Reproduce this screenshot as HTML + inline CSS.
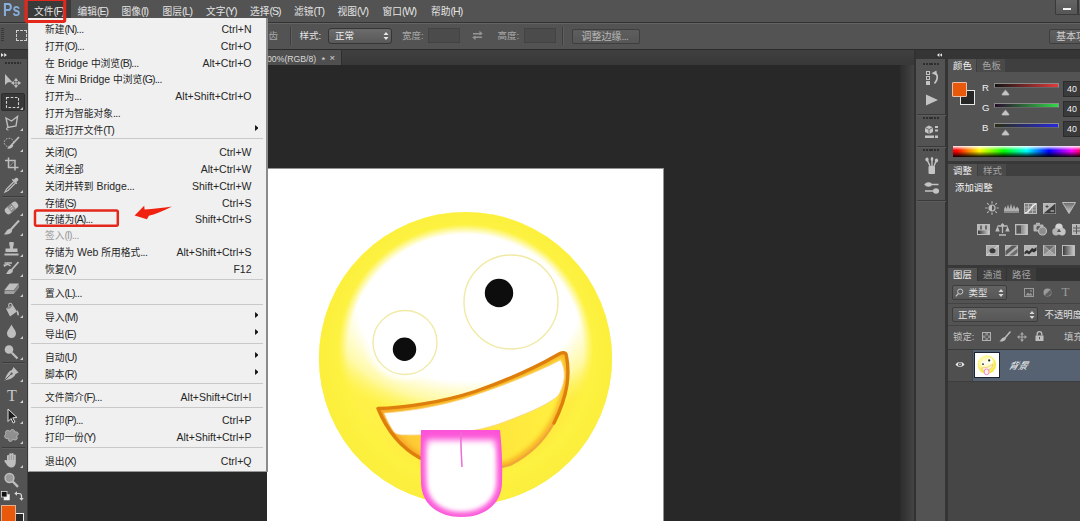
<!DOCTYPE html>
<html lang="zh"><head><meta charset="utf-8"><title>Photoshop</title>
<style>
html,body{margin:0;padding:0;}
body{width:1080px;height:521px;overflow:hidden;background:#282828;font-family:"Liberation Sans","Noto Sans CJK SC",sans-serif;}
#root{position:relative;width:1080px;height:521px;overflow:hidden;background:#282828;}
#root div,#root svg.a{position:absolute;}
#root div{box-sizing:border-box;}
.t{white-space:nowrap;letter-spacing:0;}
span.cj{font-size:1em;letter-spacing:0;}
.p{letter-spacing:-0.9px}
.d{letter-spacing:-0.5px}
.m span.cj{font-size:0.925em}
</style></head>
<body>
<div id="root">
<div style="left:0px;top:0px;width:1080px;height:22px;background:#535353;"></div>
<div style="left:0px;top:22px;width:1080px;height:1px;background:#333;"></div>
<div style="left:0px;top:23px;width:1080px;height:26px;background:#535353;"></div>
<div style="left:0px;top:23px;width:1080px;height:1px;background:#646464;"></div>
<div style="left:0px;top:49px;width:1080px;height:1px;background:#2b2b2b;"></div>
<div style="left:28px;top:50px;width:889px;height:15px;background:linear-gradient(#404040,#383838);"></div>
<div style="left:28px;top:50px;width:313px;height:15px;background:#4f4f4f;"></div>
<div style="left:341px;top:50px;width:1px;height:15px;background:#2e2e2e;"></div>
<div style="left:0px;top:50px;width:28px;height:471px;background:#535353;"></div>
<div style="left:0px;top:50px;width:28px;height:9px;background:#3c3c3c;"></div>
<div style="left:27px;top:50px;width:1px;height:471px;background:#3a3a3a;"></div>
<div style="left:267px;top:168px;width:397px;height:353px;background:#939393;"></div>
<div style="left:267px;top:169px;width:396px;height:352px;background:#fff;"></div>
<div class="t" style="left:2.5px;top:-1px;font-size:18.5px;line-height:22px;font-weight:bold;color:#86addc;transform:scaleX(0.76);transform-origin:0 0">Ps</div>
<div style="left:28px;top:0px;width:43px;height:18px;background:#3a3a3a;"></div>
<div class="t m" style="left:34px;top:3.5px;font-size:10.5px;line-height:14px;color:#e4e4e4;"><span class="cj">文件</span><span class="p">(F)</span></div>
<div class="t m" style="left:77.5px;top:3.5px;font-size:10.5px;line-height:14px;color:#e4e4e4;"><span class="cj">编辑</span><span class="p">(E)</span></div>
<div class="t m" style="left:121.5px;top:3.5px;font-size:10.5px;line-height:14px;color:#e4e4e4;"><span class="cj">图像</span><span class="p">(I)</span></div>
<div class="t m" style="left:162.5px;top:3.5px;font-size:10.5px;line-height:14px;color:#e4e4e4;"><span class="cj">图层</span><span class="p">(L)</span></div>
<div class="t m" style="left:206px;top:3.5px;font-size:10.5px;line-height:14px;color:#e4e4e4;"><span class="cj">文字</span><span class="p">(Y)</span></div>
<div class="t m" style="left:250px;top:3.5px;font-size:10.5px;line-height:14px;color:#e4e4e4;"><span class="cj">选择</span><span class="p">(S)</span></div>
<div class="t m" style="left:294px;top:3.5px;font-size:10.5px;line-height:14px;color:#e4e4e4;"><span class="cj">滤镜</span><span class="p">(T)</span></div>
<div class="t m" style="left:337.5px;top:3.5px;font-size:10.5px;line-height:14px;color:#e4e4e4;"><span class="cj">视图</span><span class="p">(V)</span></div>
<div class="t m" style="left:382.5px;top:3.5px;font-size:10.5px;line-height:14px;color:#e4e4e4;"><span class="cj">窗口</span><span class="p">(W)</span></div>
<div class="t m" style="left:431px;top:3.5px;font-size:10.5px;line-height:14px;color:#e4e4e4;"><span class="cj">帮助</span><span class="p">(H)</span></div>
<div style="left:1055px;top:-1px;width:23px;height:16px;background:linear-gradient(#646464,#565656);border:1px solid #3a3a3a;border-radius:1px"></div>
<div style="left:1062.5px;top:8px;width:8px;height:2px;background:#f4f4f4;"></div>
<div style="left:1078px;top:-1px;width:5px;height:16px;background:linear-gradient(#646464,#565656);border:1px solid #3a3a3a"></div>
<div style="left:1px;top:28px;width:3px;height:14px;background:repeating-linear-gradient(#383838 0 1px,transparent 1px 2px);"></div>
<div style="left:16px;top:30px;width:11px;height:11px;border:1px dashed #cfcfcf"></div>
<div style="left:290px;top:27px;width:1px;height:18px;background:#3e3e3e;"></div>
<div style="left:291px;top:27px;width:1px;height:18px;background:#5e5e5e;"></div>
<div class="t" style="left:268.5px;top:29px;font-size:9.5px;line-height:14px;color:#a8a8a8;"><span class="cj">齿</span></div>
<div class="t" style="left:299.5px;top:29px;font-size:9.5px;line-height:14px;color:#e4e4e4;"><span class="cj">样式</span>:</div>
<div style="left:328px;top:28px;width:64px;height:16px;border:1px solid #353535;border-radius:3px;background:linear-gradient(#6b6b6b,#595959)"></div>
<div class="t" style="left:335px;top:29px;font-size:9.5px;line-height:14px;color:#f0f0f0;"><span class="cj">正常</span></div>
<svg class="a" style="left:383px;top:31px" width="6" height="10" viewBox="0 0 6 10"><path d="M0.5 4 L3 1 L5.5 4Z M0.5 6 L3 9 L5.5 6Z" fill="#e8e8e8"/></svg>
<div class="t" style="left:402px;top:29px;font-size:9.5px;line-height:14px;color:#a8a8a8;"><span class="cj">宽度</span>:</div>
<div style="left:428px;top:28px;width:32px;height:15px;border:1px solid #434343;background:#4b4b4b"></div>
<svg class="a" style="left:472px;top:30px" width="11" height="11" viewBox="0 0 11 11"><path d="M1 3 H7.5 V0.8 L10.8 3.8 L7.5 5.5 V4.6 H1Z M10 8 H3.5 V10.2 L0.2 7.2 L3.5 5.5 V6.4 H10Z" fill="#959595"/></svg>
<div class="t" style="left:497.5px;top:29px;font-size:9.5px;line-height:14px;color:#a8a8a8;"><span class="cj">高度</span>:</div>
<div style="left:524px;top:28px;width:32px;height:15px;border:1px solid #434343;background:#4b4b4b"></div>
<div style="left:562px;top:27px;width:1px;height:18px;background:#3e3e3e;"></div>
<div style="left:563px;top:27px;width:1px;height:18px;background:#5e5e5e;"></div>
<div style="left:572px;top:29px;width:68px;height:15px;border:1px solid #3e3e3e;border-radius:2px;background:linear-gradient(#5e5e5e,#565656)"></div>
<div class="t" style="left:581.5px;top:29.5px;font-size:10px;line-height:14px;color:#b6b6b6;"><span class="cj">调整边缘</span><span class="d">...</span></div>
<div style="left:1049px;top:29px;width:40px;height:15px;border:1px solid #3e3e3e;border-radius:2px;background:linear-gradient(#5e5e5e,#565656)"></div>
<div class="t" style="left:1056px;top:29.5px;font-size:10px;line-height:14px;color:#d0d0d0;"><span class="cj">基本功</span></div>
<div class="t" style="left:267px;top:51.5px;font-size:8.7px;line-height:14px;color:#d8d8d8;">00%(RGB/8)</div>
<div class="t" style="left:321.5px;top:52.5px;font-size:9.5px;line-height:14px;color:#d8d8d8;">*</div>
<div class="t" style="left:329.5px;top:51px;font-size:9.5px;line-height:14px;color:#d8d8d8;">×</div>
<div style="left:28px;top:18px;width:240px;height:454px;background:#f0f0f0;border-right:2px solid rgba(40,40,40,.5);border-bottom:1px solid rgba(40,40,40,.45);border-left:1px solid #dcdcdc"></div>
<div style="left:31px;top:138px;width:232px;height:1px;background:#c9c9c9;"></div>
<div style="left:31px;top:278.5px;width:232px;height:1px;background:#c9c9c9;"></div>
<div style="left:31px;top:303.5px;width:232px;height:1px;background:#c9c9c9;"></div>
<div style="left:31px;top:342.5px;width:232px;height:1px;background:#c9c9c9;"></div>
<div style="left:31px;top:382.5px;width:232px;height:1px;background:#c9c9c9;"></div>
<div style="left:31px;top:406.5px;width:232px;height:1px;background:#c9c9c9;"></div>
<div style="left:31px;top:446.5px;width:232px;height:1px;background:#c9c9c9;"></div>
<div class="t m" style="left:45px;top:22px;font-size:10.5px;line-height:14px;color:#262626;"><span class="cj">新建</span><span class="p">(N)</span><span class="d">...</span></div>
<div class="t" style="right:828.5px;top:22px;font-size:10.5px;line-height:14px;color:#262626;">Ctrl+N</div>
<div class="t m" style="left:45px;top:38.5px;font-size:10.5px;line-height:14px;color:#262626;"><span class="cj">打开</span><span class="p">(O)</span><span class="d">...</span></div>
<div class="t" style="right:828.5px;top:38.5px;font-size:10.5px;line-height:14px;color:#262626;">Ctrl+O</div>
<div class="t m" style="left:45px;top:55.5px;font-size:10.5px;line-height:14px;color:#262626;"><span class="cj">在</span> Bridge <span class="cj">中浏览</span><span class="p">(B)</span><span class="d">...</span></div>
<div class="t" style="right:828.5px;top:55.5px;font-size:10.5px;line-height:14px;color:#262626;">Alt+Ctrl+O</div>
<div class="t m" style="left:45px;top:72px;font-size:10.5px;line-height:14px;color:#262626;"><span class="cj">在</span> Mini Bridge <span class="cj">中浏览</span><span class="p">(G)</span><span class="d">...</span></div>
<div class="t m" style="left:45px;top:88.5px;font-size:10.5px;line-height:14px;color:#262626;"><span class="cj">打开为</span><span class="d">...</span></div>
<div class="t" style="right:828.5px;top:88.5px;font-size:10.5px;line-height:14px;color:#262626;">Alt+Shift+Ctrl+O</div>
<div class="t m" style="left:45px;top:105.5px;font-size:10.5px;line-height:14px;color:#262626;"><span class="cj">打开为智能对象</span><span class="d">...</span></div>
<div class="t m" style="left:45px;top:122.5px;font-size:10.5px;line-height:14px;color:#262626;"><span class="cj">最近打开文件</span><span class="p">(T)</span></div>
<svg class="a" style="left:254.7px;top:125px" width="3.6" height="6" viewBox="0 0 4 7"><path d="M0 0 L4 3.5 L0 7Z" fill="#111"/></svg>
<div class="t m" style="left:45px;top:145px;font-size:10.5px;line-height:14px;color:#262626;"><span class="cj">关闭</span><span class="p">(C)</span></div>
<div class="t" style="right:828.5px;top:145px;font-size:10.5px;line-height:14px;color:#262626;">Ctrl+W</div>
<div class="t m" style="left:45px;top:162px;font-size:10.5px;line-height:14px;color:#262626;"><span class="cj">关闭全部</span></div>
<div class="t" style="right:828.5px;top:162px;font-size:10.5px;line-height:14px;color:#262626;">Alt+Ctrl+W</div>
<div class="t m" style="left:45px;top:178.5px;font-size:10.5px;line-height:14px;color:#262626;"><span class="cj">关闭并转到</span> Bridge<span class="d">...</span></div>
<div class="t" style="right:828.5px;top:178.5px;font-size:10.5px;line-height:14px;color:#262626;">Shift+Ctrl+W</div>
<div class="t m" style="left:45px;top:195.5px;font-size:10.5px;line-height:14px;color:#262626;"><span class="cj">存储</span><span class="p">(S)</span></div>
<div class="t" style="right:828.5px;top:195.5px;font-size:10.5px;line-height:14px;color:#262626;">Ctrl+S</div>
<div class="t m" style="left:45px;top:211.5px;font-size:10.5px;line-height:14px;color:#262626;"><span class="cj">存储为</span><span class="p">(A)</span><span class="d">...</span></div>
<div class="t" style="right:828.5px;top:211.5px;font-size:10.5px;line-height:14px;color:#262626;">Shift+Ctrl+S</div>
<div class="t m" style="left:45px;top:228px;font-size:10.5px;line-height:14px;color:#9a9a9a;"><span class="cj">签入</span><span class="p">(I)</span><span class="d">...</span></div>
<div class="t m" style="left:45px;top:245px;font-size:10.5px;line-height:14px;color:#262626;"><span class="cj">存储为</span> Web <span class="cj">所用格式</span><span class="d">...</span></div>
<div class="t" style="right:828.5px;top:245px;font-size:10.5px;line-height:14px;color:#262626;">Alt+Shift+Ctrl+S</div>
<div class="t m" style="left:45px;top:261.5px;font-size:10.5px;line-height:14px;color:#262626;"><span class="cj">恢复</span><span class="p">(V)</span></div>
<div class="t" style="right:828.5px;top:261.5px;font-size:10.5px;line-height:14px;color:#262626;">F12</div>
<div class="t m" style="left:45px;top:286px;font-size:10.5px;line-height:14px;color:#262626;"><span class="cj">置入</span><span class="p">(L)</span><span class="d">...</span></div>
<div class="t m" style="left:45px;top:309.5px;font-size:10.5px;line-height:14px;color:#262626;"><span class="cj">导入</span><span class="p">(M)</span></div>
<svg class="a" style="left:254.7px;top:312px" width="3.6" height="6" viewBox="0 0 4 7"><path d="M0 0 L4 3.5 L0 7Z" fill="#111"/></svg>
<div class="t m" style="left:45px;top:326.5px;font-size:10.5px;line-height:14px;color:#262626;"><span class="cj">导出</span><span class="p">(E)</span></div>
<svg class="a" style="left:254.7px;top:329px" width="3.6" height="6" viewBox="0 0 4 7"><path d="M0 0 L4 3.5 L0 7Z" fill="#111"/></svg>
<div class="t m" style="left:45px;top:349.5px;font-size:10.5px;line-height:14px;color:#262626;"><span class="cj">自动</span><span class="p">(U)</span></div>
<svg class="a" style="left:254.7px;top:352px" width="3.6" height="6" viewBox="0 0 4 7"><path d="M0 0 L4 3.5 L0 7Z" fill="#111"/></svg>
<div class="t m" style="left:45px;top:366.5px;font-size:10.5px;line-height:14px;color:#262626;"><span class="cj">脚本</span><span class="p">(R)</span></div>
<svg class="a" style="left:254.7px;top:369px" width="3.6" height="6" viewBox="0 0 4 7"><path d="M0 0 L4 3.5 L0 7Z" fill="#111"/></svg>
<div class="t m" style="left:45px;top:389.5px;font-size:10.5px;line-height:14px;color:#262626;"><span class="cj">文件简介</span><span class="p">(F)</span><span class="d">...</span></div>
<div class="t" style="right:828.5px;top:389.5px;font-size:10.5px;line-height:14px;color:#262626;">Alt+Shift+Ctrl+I</div>
<div class="t m" style="left:45px;top:413px;font-size:10.5px;line-height:14px;color:#262626;"><span class="cj">打印</span><span class="p">(P)</span><span class="d">...</span></div>
<div class="t" style="right:828.5px;top:413px;font-size:10.5px;line-height:14px;color:#262626;">Ctrl+P</div>
<div class="t m" style="left:45px;top:430px;font-size:10.5px;line-height:14px;color:#262626;"><span class="cj">打印一份</span><span class="p">(Y)</span></div>
<div class="t" style="right:828.5px;top:430px;font-size:10.5px;line-height:14px;color:#262626;">Alt+Shift+Ctrl+P</div>
<div class="t m" style="left:45px;top:454px;font-size:10.5px;line-height:14px;color:#262626;"><span class="cj">退出</span><span class="p">(X)</span></div>
<div class="t" style="right:828.5px;top:454px;font-size:10.5px;line-height:14px;color:#262626;">Ctrl+Q</div>
<svg class="a" style="left:0.5px;top:52.5px" width="6.4" height="4" viewBox="0 0 8 5"><path d="M0 0 V5 L3.4 2.5Z M4 0 V5 L7.4 2.5Z" fill="#e6e6e6"/></svg>
<div style="left:4.5px;top:62px;width:16px;height:2px;background:repeating-linear-gradient(90deg,#2f2f2f 0 2px,transparent 2px 3px)"></div>
<svg class="a" style="left:3px;top:73px" width="18" height="16" viewBox="0 0 18 16"><path d="M2 1 L2 12 L5 9.2 L9.5 9.2Z" fill="#bebebe"/><path d="M13 6 V14 M9 10 H17 M13 5.5 l-1.5 2 h3z M13 14.5 l-1.5 -2 h3z M8.5 10 l2 -1.5 v3z M17.5 10 l-2 -1.5 v3z" fill="#bebebe" stroke="#bebebe" stroke-width="0.9"/></svg>
<div style="left:1px;top:93px;width:24px;height:18px;background:#383838;border-radius:2px;border:1px solid #2d2d2d"></div>
<svg class="a" style="left:4px;top:94.5px" width="17" height="15" viewBox="0 0 17 15"><rect x="2.5" y="2.5" width="12" height="10" fill="none" stroke="#d4d4d4" stroke-width="1.1" stroke-dasharray="2.6 1.6"/></svg>
<svg class="a" style="left:20px;top:107px" width="3" height="3" viewBox="0 0 3 3"><path d="M3 0 V3 H0Z" fill="#c8c8c8"/></svg>
<svg class="a" style="left:3px;top:115px" width="18" height="16" viewBox="0 0 18 16"><path d="M3 3 L8.5 6 L14.5 1.5 L13 11 L5 12.5 Z" fill="none" stroke="#bebebe" stroke-width="1.4"/><path d="M5 12.5 C3 13 3 15 5.5 15" fill="none" stroke="#bebebe" stroke-width="1.1"/></svg>
<svg class="a" style="left:20px;top:128px" width="3" height="3" viewBox="0 0 3 3"><path d="M3 0 V3 H0Z" fill="#c8c8c8"/></svg>
<svg class="a" style="left:3px;top:135.5px" width="18" height="16" viewBox="0 0 18 16"><ellipse cx="6" cy="6.5" rx="4.8" ry="4.2" fill="none" stroke="#bebebe" stroke-width="1" stroke-dasharray="1.6 1.3"/><path d="M16 1 L8.5 9" stroke="#bebebe" stroke-width="1.8"/><path d="M9 8 C7 8.5 6 10.5 4 12.5 C7 13 9.8 12 10.3 9.5Z" fill="#bebebe"/></svg>
<svg class="a" style="left:20px;top:148.5px" width="3" height="3" viewBox="0 0 3 3"><path d="M3 0 V3 H0Z" fill="#c8c8c8"/></svg>
<svg class="a" style="left:3px;top:156px" width="18" height="16" viewBox="0 0 18 16"><path d="M5.5 1.5 V11.5 H15.5 M2 4.5 H12 V14.5" fill="none" stroke="#bebebe" stroke-width="1.5"/><path d="M6.5 10.5 L11 5.5" stroke="#999" stroke-width="0.8"/></svg>
<svg class="a" style="left:20px;top:169px" width="3" height="3" viewBox="0 0 3 3"><path d="M3 0 V3 H0Z" fill="#c8c8c8"/></svg>
<svg class="a" style="left:3px;top:176.5px" width="18" height="16" viewBox="0 0 18 16"><path d="M12.5 1 C14 -0.2 16.2 2 15 3.5 L12.8 5.7 L10.3 3.2Z" fill="#bebebe"/><path d="M11 4.5 L3.5 12 L2 15 L5 13.5 L12.5 6" fill="none" stroke="#bebebe" stroke-width="1.2"/><path d="M9.3 2.2 L13.8 6.7" stroke="#bebebe" stroke-width="1.6"/></svg>
<svg class="a" style="left:20px;top:189.5px" width="3" height="3" viewBox="0 0 3 3"><path d="M3 0 V3 H0Z" fill="#c8c8c8"/></svg>
<div style="left:2px;top:196px;width:23px;height:1px;background:#3c3c3c;"></div>
<div style="left:2px;top:197px;width:23px;height:1px;background:#5e5e5e;"></div>
<svg class="a" style="left:3px;top:199.5px" width="18" height="16" viewBox="0 0 18 16"><g transform="rotate(-40 8.5 8)"><rect x="1" y="4.5" width="15" height="7" rx="3.2" fill="#bebebe"/><rect x="5.8" y="4.5" width="5.4" height="7" fill="#8a8a8a"/><circle cx="7.5" cy="7" r="0.6" fill="#eee"/><circle cx="9.5" cy="7" r="0.6" fill="#eee"/><circle cx="7.5" cy="9" r="0.6" fill="#eee"/><circle cx="9.5" cy="9" r="0.6" fill="#eee"/></g></svg>
<svg class="a" style="left:20px;top:212.5px" width="3" height="3" viewBox="0 0 3 3"><path d="M3 0 V3 H0Z" fill="#c8c8c8"/></svg>
<svg class="a" style="left:3px;top:220px" width="18" height="16" viewBox="0 0 18 16"><path d="M16 0.5 L7 10.5" stroke="#bebebe" stroke-width="2"/><path d="M7.3 8.7 C5 8.3 3.5 10.5 1 14.5 C5 15 8.8 13.5 9.2 10.5Z" fill="#bebebe"/></svg>
<svg class="a" style="left:20px;top:233px" width="3" height="3" viewBox="0 0 3 3"><path d="M3 0 V3 H0Z" fill="#c8c8c8"/></svg>
<svg class="a" style="left:3px;top:241px" width="18" height="16" viewBox="0 0 18 16"><path d="M6.5 1 H10.5 C11.5 3 10 5 10 7.5 H14.5 V11 H2.5 V7.5 H7 C7 5 5.5 3 6.5 1Z" fill="#bebebe"/><rect x="1.5" y="12.5" width="14" height="2" fill="#bebebe"/></svg>
<svg class="a" style="left:20px;top:254px" width="3" height="3" viewBox="0 0 3 3"><path d="M3 0 V3 H0Z" fill="#c8c8c8"/></svg>
<svg class="a" style="left:3px;top:261px" width="18" height="16" viewBox="0 0 18 16"><path d="M15.5 1 L8 9.5" stroke="#bebebe" stroke-width="1.8"/><path d="M8.3 8 C6.3 7.7 5 9.5 3 13 C6.5 13.5 9.6 12.2 10 9.7Z" fill="#bebebe"/><path d="M1.5 2 H9 M1 5 C3 3 6 3 7.5 5" fill="none" stroke="#bebebe" stroke-width="1.3"/><path d="M0.5 3 L1.2 6 L3.8 4.6Z" fill="#bebebe"/></svg>
<svg class="a" style="left:20px;top:274px" width="3" height="3" viewBox="0 0 3 3"><path d="M3 0 V3 H0Z" fill="#c8c8c8"/></svg>
<svg class="a" style="left:3px;top:281px" width="18" height="16" viewBox="0 0 18 16"><path d="M6.5 2.5 H16 L11 9 H1.5Z" fill="#bebebe"/><path d="M1.5 9.5 H11 V13 H1.5Z" fill="#a0a0a0"/><path d="M11 9.5 L16 3 V6.5 L11 13Z" fill="#8a8a8a"/></svg>
<svg class="a" style="left:20px;top:294px" width="3" height="3" viewBox="0 0 3 3"><path d="M3 0 V3 H0Z" fill="#c8c8c8"/></svg>
<svg class="a" style="left:3px;top:302px" width="18" height="16" viewBox="0 0 18 16"><path d="M3 6.5 L9.5 2.5 L14 9.5 L7 14.5 Z" fill="#bebebe"/><path d="M6 5 C4.5 0.5 9 0 9.2 3.5" fill="none" stroke="#bebebe" stroke-width="1.1"/><path d="M14 8 C16 10 16.5 12.5 15.2 14 C13.8 12.5 13.5 10 14 8Z" fill="#bebebe"/><path d="M3 6.5 C5 7.8 9 6.5 9.5 2.5" fill="#8a8a8a"/></svg>
<svg class="a" style="left:20px;top:315px" width="3" height="3" viewBox="0 0 3 3"><path d="M3 0 V3 H0Z" fill="#c8c8c8"/></svg>
<svg class="a" style="left:3px;top:323px" width="18" height="16" viewBox="0 0 18 16"><path d="M8.5 1.5 C10.5 5.5 13 8 13 10.5 A4.5 4.5 0 0 1 4 10.5 C4 8 6.5 5.5 8.5 1.5Z" fill="#bebebe"/></svg>
<svg class="a" style="left:20px;top:336px" width="3" height="3" viewBox="0 0 3 3"><path d="M3 0 V3 H0Z" fill="#c8c8c8"/></svg>
<svg class="a" style="left:3px;top:344px" width="18" height="16" viewBox="0 0 18 16"><circle cx="6" cy="5.5" r="4.3" fill="#bebebe"/><path d="M8.8 8.8 L14.5 14.5" stroke="#bebebe" stroke-width="2.2"/></svg>
<svg class="a" style="left:20px;top:357px" width="3" height="3" viewBox="0 0 3 3"><path d="M3 0 V3 H0Z" fill="#c8c8c8"/></svg>
<div style="left:2px;top:362px;width:23px;height:1px;background:#3c3c3c;"></div>
<div style="left:2px;top:363px;width:23px;height:1px;background:#5e5e5e;"></div>
<svg class="a" style="left:3px;top:366px" width="18" height="16" viewBox="0 0 18 16"><path d="M10.5 1 L15.5 6.5 L12.5 8 C11.5 11.5 7 13.5 1.5 14.5 C3 9.5 5.5 5 9 4Z" fill="#bebebe"/><path d="M2 14 L8 8.2" stroke="#535353" stroke-width="1"/><circle cx="8.6" cy="7.7" r="1.1" fill="#535353"/></svg>
<svg class="a" style="left:20px;top:379px" width="3" height="3" viewBox="0 0 3 3"><path d="M3 0 V3 H0Z" fill="#c8c8c8"/></svg>
<div class="t" style="left:7px;top:384.5px;font-family:'Liberation Serif',serif;font-size:16px;line-height:22px;color:#c8c8c8">T</div>
<svg class="a" style="left:20px;top:400px" width="3" height="3" viewBox="0 0 3 3"><path d="M3 0 V3 H0Z" fill="#d8d8d8"/></svg>
<svg class="a" style="left:3px;top:407.5px" width="18" height="16" viewBox="0 0 18 16"><path d="M5 1 V13.5 L8 10.5 L10.2 15 L12 14 L9.8 9.8 L14 9.5Z" fill="#1e1e1e" stroke="#e0e0e0" stroke-width="1"/></svg>
<svg class="a" style="left:20px;top:420.5px" width="3" height="3" viewBox="0 0 3 3"><path d="M3 0 V3 H0Z" fill="#c8c8c8"/></svg>
<svg class="a" style="left:3px;top:428px" width="18" height="16" viewBox="0 0 18 16"><path d="M3 6 C1 3 5 1 7 3.5 C8 0.5 12 1 11.5 4 C15 3 17 6.5 13.5 8 C16 11 12 13.5 10 11 C9 14.5 4.5 14 5.5 10.5 C1.5 11.5 0.5 7.5 3 6Z" fill="#8f8f8f" stroke="#bebebe" stroke-width="0.8"/></svg>
<svg class="a" style="left:20px;top:441px" width="3" height="3" viewBox="0 0 3 3"><path d="M3 0 V3 H0Z" fill="#c8c8c8"/></svg>
<div style="left:2px;top:447px;width:23px;height:1px;background:#3c3c3c;"></div>
<div style="left:2px;top:448px;width:23px;height:1px;background:#5e5e5e;"></div>
<svg class="a" style="left:3px;top:451.5px" width="18" height="16" viewBox="0 0 18 16"><path d="M4 8.5 V4 a1.1 1.1 0 0 1 2.2 0 V2.3 a1.1 1.1 0 0 1 2.2 0 V2 a1.1 1.1 0 0 1 2.2 0 V3.5 a1.1 1.1 0 0 1 2.2 0 V10 C12.8 13.5 11 15.5 8.5 15.5 C6 15.5 4.5 14 1.5 9.5 C1 8.2 2.5 7.5 4 8.5Z" fill="#bebebe"/><path d="M6.2 4 V8 M8.4 3 V8 M10.6 3.5 V8" stroke="#777" stroke-width="0.5"/></svg>
<svg class="a" style="left:20px;top:464.5px" width="3" height="3" viewBox="0 0 3 3"><path d="M3 0 V3 H0Z" fill="#c8c8c8"/></svg>
<svg class="a" style="left:3px;top:471.5px" width="18" height="16" viewBox="0 0 18 16"><circle cx="6.5" cy="6" r="4.4" fill="#9a9a9a" stroke="#bebebe" stroke-width="1.5"/><path d="M9.8 9.5 L15 14.8" stroke="#bebebe" stroke-width="2.4"/></svg>
<svg class="a" style="left:1px;top:491px" width="9" height="10" viewBox="0 0 9 10"><rect x="3" y="3.5" width="5.5" height="5.5" fill="#f4f4f4" stroke="#ddd" stroke-width="0.6"/><rect x="0.5" y="0.5" width="5.5" height="5.5" fill="#111" stroke="#ddd" stroke-width="0.8"/></svg>
<svg class="a" style="left:14px;top:491px" width="10" height="10" viewBox="0 0 10 10"><path d="M2.5 2.5 H5 A2.5 2.5 0 0 1 7.5 5 V7.5" fill="none" stroke="#d8d8d8" stroke-width="1.2"/><path d="M3 0.3 V4.7 L0.3 2.5Z M5.3 7 H9.7 L7.5 9.7Z" fill="#d8d8d8"/></svg>
<div style="left:10px;top:513px;width:14px;height:14px;background:#2a2a2a;border:1px solid #f0f0f0"></div>
<div style="left:1px;top:505px;width:15px;height:20px;background:#e8590c;border:1px solid #e6b090"></div>
<div style="left:900px;top:65px;width:14px;height:456px;background:linear-gradient(90deg,#2c2c2c,#444);"></div>
<div style="left:914px;top:50px;width:2px;height:471px;background:#323232;"></div>
<div style="left:916px;top:50px;width:164px;height:9px;background:#353535;"></div>
<div style="left:916px;top:59px;width:29px;height:462px;background:#535353;"></div>
<div style="left:945px;top:59px;width:3px;height:462px;background:#343434;"></div>
<svg class="a" style="left:936.5px;top:52.5px" width="5.6" height="4" viewBox="0 0 7 5"><path d="M3 0 V5 L0 2.5Z M6.5 0 V5 L3.5 2.5Z" fill="#e6e6e6"/></svg>
<div style="left:923px;top:62.5px;width:16px;height:2px;background:repeating-linear-gradient(90deg,#2f2f2f 0 2px,transparent 2px 2.8px)"></div>
<div style="left:923px;top:117px;width:16px;height:2px;background:repeating-linear-gradient(90deg,#2f2f2f 0 2px,transparent 2px 2.8px)"></div>
<div style="left:923px;top:149px;width:16px;height:2px;background:repeating-linear-gradient(90deg,#2f2f2f 0 2px,transparent 2px 2.8px)"></div>
<div style="left:917px;top:114px;width:29px;height:1px;background:#3a3a3a;"></div>
<div style="left:917px;top:115px;width:29px;height:1px;background:#5c5c5c;"></div>
<div style="left:917px;top:146px;width:29px;height:1px;background:#3a3a3a;"></div>
<div style="left:917px;top:147px;width:29px;height:1px;background:#5c5c5c;"></div>
<div style="left:917px;top:200px;width:29px;height:1px;background:#3a3a3a;"></div>
<div style="left:917px;top:201px;width:29px;height:1px;background:#5c5c5c;"></div>
<svg class="a" style="left:925px;top:70px" width="14" height="16" viewBox="0 0 14 16"><rect x="1.5" y="1.5" width="3" height="3" fill="none" stroke="#c4c4c4"/><rect x="1.5" y="6.5" width="3" height="3" fill="none" stroke="#c4c4c4"/><rect x="1" y="11" width="4" height="4" fill="#c4c4c4"/><path d="M6.5 3.2 L11.5 0.5 L11.5 5.5 Z" fill="#c4c4c4"/><path d="M10.5 2.8 C13.2 5.5 12.8 10 9.5 13.5" fill="none" stroke="#c4c4c4" stroke-width="1.7"/></svg>
<svg class="a" style="left:925px;top:94px" width="14" height="12" viewBox="0 0 14 12"><path d="M1 0.5 L13 6 L1 11.5Z" fill="#c4c4c4"/></svg>
<svg class="a" style="left:924px;top:125px" width="16" height="14" viewBox="0 0 16 14"><path d="M5 0.5 L9 2.5 V7 L5 9 L1 7 V2.5Z" fill="#c4c4c4"/><path d="M5 4.5 L9 2.5 M5 4.5 L1 2.5 M5 4.5 V9" stroke="#535353" stroke-width="0.8" fill="none"/><rect x="11" y="1" width="3" height="2" fill="#c4c4c4"/><rect x="11" y="4.5" width="3" height="2" fill="#c4c4c4"/><rect x="1" y="10.5" width="9" height="2.5" fill="#c4c4c4"/><rect x="11" y="10.5" width="3" height="2.5" fill="#c4c4c4"/></svg>
<svg class="a" style="left:924px;top:157px" width="16" height="18" viewBox="0 0 16 18"><rect x="4.5" y="9" width="6.5" height="8" rx="1" fill="#c4c4c4"/><path d="M6 9 L3 2.5 M8 9 V1.5 M10 9 L12.5 3" stroke="#c4c4c4" stroke-width="1.4" fill="none"/><ellipse cx="3" cy="2.5" rx="1.6" ry="2" fill="#c4c4c4"/><ellipse cx="8" cy="2" rx="1.3" ry="2" fill="#c4c4c4"/><ellipse cx="12.5" cy="3.5" rx="1.6" ry="2" fill="#c4c4c4"/></svg>
<svg class="a" style="left:924px;top:181px" width="16" height="14" viewBox="0 0 16 14"><path d="M0.5 3.5 H14.5 M1 10 H15" stroke="#c4c4c4" stroke-width="1.4"/><ellipse cx="4.5" cy="3.5" rx="3.2" ry="2.2" fill="#c4c4c4"/><ellipse cx="12" cy="10" rx="3" ry="2.8" fill="#c4c4c4"/></svg>
<div style="left:948px;top:59px;width:132px;height:102px;background:#535353;"></div>
<div style="left:948px;top:59px;width:132px;height:13px;background:#3f3f3f;"></div>
<div style="left:948px;top:59px;width:28px;height:14px;background:#535353;"></div>
<div class="t" style="left:953px;top:59px;font-size:9.4px;line-height:14px;color:#f0f0f0;"><span class="cj">颜色</span></div>
<div style="left:977px;top:59px;width:28px;height:13px;background:#4a4a4a;"></div>
<div class="t" style="left:982px;top:59px;font-size:9.4px;line-height:14px;color:#a4a4a4;"><span class="cj">色板</span></div>
<div style="left:948px;top:161px;width:132px;height:3px;background:#383838;"></div>
<div style="left:960px;top:90px;width:15px;height:15px;background:#262626;border:1px solid #e8e8e8"></div>
<div style="left:952px;top:82px;width:15px;height:15px;background:#e8590c;border:1px solid #e6c0a8;border-radius:1px"></div>
<div class="t" style="left:982px;top:81px;font-size:9.6px;line-height:14px;color:#f0f0f0;">R</div>
<div style="left:994px;top:83px;width:65px;height:5px;border:1px solid #8a8a8a;border-bottom-color:#666;background:linear-gradient(90deg,#141414,#e03c3c)"></div>
<svg class="a" style="left:1001px;top:88.5px" width="9" height="7" viewBox="0 0 9 7"><path d="M4.5 0.6 C5.5 2.2 8.3 4.6 8.3 5.6 C8.3 6.3 7.6 6.6 6.8 6.6 H2.2 C1.4 6.6 0.7 6.3 0.7 5.6 C0.7 4.6 3.5 2.2 4.5 0.6Z" fill="#c4c4c4" stroke="#6a6a6a" stroke-width="0.5"/></svg>
<div style="left:1063px;top:80.5px;width:20px;height:16px;background:#3a3a3a;border:1px solid #2c2c2c"></div>
<div class="t" style="left:1067px;top:82px;font-size:8.8px;line-height:14px;color:#f2f2f2;">40</div>
<div class="t" style="left:982px;top:101px;font-size:9.6px;line-height:14px;color:#f0f0f0;">G</div>
<div style="left:994px;top:103px;width:65px;height:5px;border:1px solid #8a8a8a;border-bottom-color:#666;background:linear-gradient(90deg,#2a0c2e,#32d848)"></div>
<svg class="a" style="left:1001px;top:108.5px" width="9" height="7" viewBox="0 0 9 7"><path d="M4.5 0.6 C5.5 2.2 8.3 4.6 8.3 5.6 C8.3 6.3 7.6 6.6 6.8 6.6 H2.2 C1.4 6.6 0.7 6.3 0.7 5.6 C0.7 4.6 3.5 2.2 4.5 0.6Z" fill="#c4c4c4" stroke="#6a6a6a" stroke-width="0.5"/></svg>
<div style="left:1063px;top:100.5px;width:20px;height:16px;background:#3a3a3a;border:1px solid #2c2c2c"></div>
<div class="t" style="left:1067px;top:102px;font-size:8.8px;line-height:14px;color:#f2f2f2;">40</div>
<div class="t" style="left:982px;top:121px;font-size:9.6px;line-height:14px;color:#f0f0f0;">B</div>
<div style="left:994px;top:123px;width:65px;height:5px;border:1px solid #8a8a8a;border-bottom-color:#666;background:linear-gradient(90deg,#2a3010,#2828e0)"></div>
<svg class="a" style="left:1001px;top:128.5px" width="9" height="7" viewBox="0 0 9 7"><path d="M4.5 0.6 C5.5 2.2 8.3 4.6 8.3 5.6 C8.3 6.3 7.6 6.6 6.8 6.6 H2.2 C1.4 6.6 0.7 6.3 0.7 5.6 C0.7 4.6 3.5 2.2 4.5 0.6Z" fill="#c4c4c4" stroke="#6a6a6a" stroke-width="0.5"/></svg>
<div style="left:1063px;top:120.5px;width:20px;height:16px;background:#3a3a3a;border:1px solid #2c2c2c"></div>
<div class="t" style="left:1067px;top:122px;font-size:8.8px;line-height:14px;color:#f2f2f2;">40</div>
<div style="left:953px;top:146px;width:127px;height:11px;background:linear-gradient(rgba(255,255,255,.95),rgba(255,255,255,0) 38%,rgba(0,0,0,0) 48%,rgba(0,0,0,.95)),linear-gradient(90deg,#f00 0%,#f00 3%,#ff0 21%,#0f0 40%,#0ff 58%,#00f 75.5%,#f0f 93.5%,#f06 100%)"></div>
<div style="left:948px;top:164px;width:132px;height:101px;background:#535353;"></div>
<div style="left:948px;top:164px;width:132px;height:12px;background:#3f3f3f;"></div>
<div style="left:948px;top:164px;width:29px;height:13px;background:#535353;"></div>
<div class="t" style="left:953px;top:163.5px;font-size:9.4px;line-height:14px;color:#f0f0f0;"><span class="cj">调整</span></div>
<div style="left:978px;top:164px;width:28px;height:12px;background:#4a4a4a;"></div>
<div class="t" style="left:983px;top:163.5px;font-size:9.4px;line-height:14px;color:#a4a4a4;"><span class="cj">样式</span></div>
<div style="left:948px;top:265px;width:132px;height:3px;background:#383838;"></div>
<div class="t" style="left:955px;top:181px;font-size:9.4px;line-height:14px;color:#f4f4f4;"><span class="cj">添加调整</span></div>
<div style="left:948px;top:268px;width:132px;height:253px;background:#535353;"></div>
<div style="left:948px;top:268px;width:132px;height:13px;background:#333333;"></div>
<div style="left:948px;top:268px;width:29px;height:14px;background:#535353;"></div>
<div class="t" style="left:953px;top:268px;font-size:9.4px;line-height:14px;color:#f0f0f0;"><span class="cj">图层</span></div>
<div style="left:978px;top:268px;width:28px;height:13px;background:#3d3d3d;"></div>
<div class="t" style="left:983px;top:268px;font-size:9.4px;line-height:14px;color:#a4a4a4;"><span class="cj">通道</span></div>
<div style="left:1007px;top:268px;width:29px;height:13px;background:#3d3d3d;"></div>
<div class="t" style="left:1012px;top:268px;font-size:9.4px;line-height:14px;color:#a4a4a4;"><span class="cj">路径</span></div>
<svg width="0" height="0" style="position:absolute"><defs><linearGradient id="vg" x1="0" y1="0" x2="0" y2="1"><stop offset="0" stop-color="#6a6a6a"/><stop offset="1" stop-color="#d0d0d0"/></linearGradient><linearGradient id="hg"><stop offset="0" stop-color="#383838"/><stop offset="1" stop-color="#cfcfcf"/></linearGradient><linearGradient id="lg"><stop offset="0" stop-color="#8a8a8a"/><stop offset="1" stop-color="#c6c6c6"/></linearGradient></defs></svg>
<svg class="a" style="left:985px;top:201px" width="14" height="14" viewBox="0 0 14 14"><circle cx="7" cy="7" r="3" fill="none" stroke="#bcbcbc" stroke-width="1.2"/><path d="M7 4 A3 3 0 0 0 7 10Z" fill="#bcbcbc"/><path d="M7 0.3 V2.4 M7 11.6 V13.7 M0.3 7 H2.4 M11.6 7 H13.7 M2.2 2.2 L3.7 3.7 M10.3 10.3 L11.8 11.8 M2.2 11.8 L3.7 10.3 M10.3 3.7 L11.8 2.2" stroke="#bcbcbc" stroke-width="1.1"/></svg>
<svg class="a" style="left:1004px;top:203px" width="15" height="10" viewBox="0 0 15 10"><path d="M0 10 V6 L1.5 3 L2.5 6 L4 1.5 L5.5 6 L7 0.5 L8.5 6 L10 2 L11.5 6 L13 3.5 L15 6 V10Z" fill="#b0b0b0"/><rect x="0" y="8" width="15" height="2" fill="#8c8c8c"/></svg>
<svg class="a" style="left:1024px;top:203px" width="13" height="11" viewBox="0 0 13 11"><rect x="0.5" y="0.5" width="12" height="10" fill="#808080" stroke="#bcbcbc"/><path d="M1 4 H12 M1 7 H12 M4.5 1 V10 M8.5 1 V10" stroke="#d0d0d0" stroke-width="0.6"/><path d="M1 10 C6 10 7 2 12 1" stroke="#f0f0f0" stroke-width="1.3" fill="none"/></svg>
<svg class="a" style="left:1043px;top:203px" width="13" height="11" viewBox="0 0 13 11"><rect x="0.5" y="0.5" width="12" height="10" fill="#b6b6b6" stroke="#bcbcbc"/><path d="M0.5 10.5 L12.5 0.5 V10.5Z" fill="#3c3c3c"/><path d="M2.5 3.5 H5.5 M4 2 V5" stroke="#444" stroke-width="0.9"/><path d="M7.5 8 H11" stroke="#eee" stroke-width="0.9"/></svg>
<svg class="a" style="left:1062px;top:202px" width="14" height="12" viewBox="0 0 14 12"><path d="M0.5 0.5 H13.5 L7 11.5Z" fill="url(#vg)" stroke="#bcbcbc" stroke-width="1"/></svg>
<svg class="a" style="left:977px;top:224px" width="13" height="11" viewBox="0 0 13 11"><rect x="0.5" y="0.5" width="12" height="10" fill="#b8b8b8" stroke="#bcbcbc"/><rect x="3" y="1.5" width="2" height="4" fill="#6a6a6a"/><rect x="8" y="1.5" width="2" height="4" fill="#6a6a6a"/><rect x="1" y="6.5" width="11" height="3.5" fill="url(#hg)"/></svg>
<svg class="a" style="left:995px;top:223px" width="15" height="13" viewBox="0 0 15 13"><path d="M7.5 0.5 V10 M2.5 3 H12.5 M4 12 H11" stroke="#bcbcbc" stroke-width="1.3" fill="none"/><path d="M2.5 3 L0.3 8.5 H4.7Z M12.5 3 L10.3 8.5 H14.7Z" fill="#bcbcbc"/><circle cx="7.5" cy="2" r="1.6" fill="#bcbcbc"/></svg>
<svg class="a" style="left:1015px;top:224px" width="13" height="11" viewBox="0 0 13 11"><rect x="0.5" y="0.5" width="12" height="10" fill="#9a9a9a" stroke="#bcbcbc"/><rect x="1.5" y="1.5" width="4.5" height="8" fill="#555"/><rect x="6.5" y="1" width="5.5" height="9" fill="url(#lg)"/></svg>
<svg class="a" style="left:1033px;top:222px" width="14" height="14" viewBox="0 0 14 14"><rect x="0.5" y="2.5" width="10" height="7" rx="1" fill="#b4b4b4"/><rect x="3" y="0.8" width="4" height="2" fill="#b4b4b4"/><circle cx="5.5" cy="6" r="2.2" fill="#5e5e5e"/><circle cx="9.5" cy="9" r="4" fill="#8e8e8e" stroke="#bdbdbd" stroke-width="1.1"/></svg>
<svg class="a" style="left:1052px;top:223px" width="14" height="13" viewBox="0 0 14 13"><circle cx="7" cy="4.2" r="3.7" fill="#d4d4d4"/><circle cx="4" cy="8.8" r="3.7" fill="#b4b4b4"/><circle cx="10" cy="8.8" r="3.7" fill="#c4c4c4"/><path d="M7 5.5 L5 9 H9Z" fill="#555"/></svg>
<svg class="a" style="left:1072px;top:224px" width="13" height="11" viewBox="0 0 13 11"><rect x="0.5" y="0.5" width="12" height="10" fill="#b4b4b4" stroke="#bcbcbc"/><path d="M1 4 H12 M1 7 H12 M4.5 1 V10 M8.5 1 V10" stroke="#555" stroke-width="0.9"/></svg>
<svg class="a" style="left:986px;top:245px" width="13" height="11" viewBox="0 0 13 11"><rect x="0.5" y="0.5" width="12" height="10" fill="#a8a8a8" stroke="#bcbcbc"/><path d="M0.5 10.5 L12.5 0.5" stroke="#ddd" stroke-width="1"/><ellipse cx="6.5" cy="5.8" rx="3" ry="2.5" fill="#3a3a3a"/></svg>
<svg class="a" style="left:1005px;top:245px" width="13" height="11" viewBox="0 0 13 11"><rect x="0.5" y="0.5" width="12" height="10" fill="#b0b0b0" stroke="#bcbcbc"/><path d="M0.5 6 L7 0.5 H12.5 L0.5 10.5Z" fill="#5a5a5a"/><path d="M4 10.5 L12.5 3.5 V7.5 L9 10.5Z" fill="#6c6c6c"/></svg>
<svg class="a" style="left:1024px;top:245px" width="13" height="11" viewBox="0 0 13 11"><rect x="0.5" y="0.5" width="12" height="10" fill="#b4b4b4" stroke="#bcbcbc"/><path d="M0.5 7 L3 5 L5 6.5 L8 3 L10 4 L12.5 2 V5.5 L10 7.5 L8 6.5 L5 9.5 L3 8 L0.5 9.5Z" fill="#2e2e2e"/></svg>
<svg class="a" style="left:1043px;top:245px" width="13" height="11" viewBox="0 0 13 11"><rect x="0.5" y="0.5" width="12" height="10" fill="#8a8a8a" stroke="#bcbcbc"/><path d="M0.5 0.5 L6.5 5.5 L12.5 0.5Z" fill="#6a6a6a"/><path d="M0.5 10.5 L6.5 5.5 L12.5 10.5Z" fill="#a8a8a8"/><path d="M0.5 0.5 L12.5 10.5 M12.5 0.5 L0.5 10.5" stroke="#c8c8c8" stroke-width="0.7"/></svg>
<svg class="a" style="left:1062px;top:245px" width="13" height="11" viewBox="0 0 13 11"><rect x="0.5" y="0.5" width="12" height="10" fill="url(#hg)" stroke="#bcbcbc"/></svg>
<div style="left:952px;top:285px;width:55px;height:15px;border:1px solid #3d3d3d;border-radius:2px;background:linear-gradient(#626262,#575757)"></div>
<svg class="a" style="left:955px;top:288px" width="9" height="9" viewBox="0 0 9 9"><circle cx="5.2" cy="3.6" r="2.6" fill="none" stroke="#c8c8c8" stroke-width="1"/><path d="M3.3 5.6 L0.8 8.4" stroke="#c8c8c8" stroke-width="1.2"/></svg>
<div class="t" style="left:968.5px;top:285.5px;font-size:9.4px;line-height:14px;color:#e2e2e2;"><span class="cj">类型</span></div>
<svg class="a" style="left:998px;top:288px" width="6" height="10" viewBox="0 0 6 10"><path d="M0.5 4 L3 1 L5.5 4Z M0.5 6 L3 9 L5.5 6Z" fill="#d8d8d8"/></svg>
<svg class="a" style="left:1024px;top:288px" width="10" height="9" viewBox="0 0 10 9"><rect x="0.5" y="0.5" width="9" height="8" fill="none" stroke="#9a9a9a"/><path d="M1.5 7.5 L4 4.5 L5.5 6 L7 5 L8.5 7.5Z" fill="#9a9a9a"/><circle cx="7" cy="2.8" r="0.9" fill="#9a9a9a"/></svg>
<svg class="a" style="left:1043px;top:288px" width="9" height="9" viewBox="0 0 9 9"><circle cx="4.5" cy="4.5" r="4" fill="#9a9a9a"/><path d="M1.7 7.3 A4 4 0 0 0 7.3 1.7Z" fill="#5e5e5e"/></svg>
<div class="t" style="left:1061.5px;top:284px;font-family:'Liberation Serif',serif;font-size:13px;line-height:16px;color:#9a9a9a">T</div>
<div style="left:948px;top:303px;width:132px;height:1px;background:#434343;"></div>
<div style="left:952px;top:307px;width:86px;height:15px;border:1px solid #3d3d3d;border-radius:2px;background:linear-gradient(#626262,#575757)"></div>
<div class="t" style="left:958px;top:307.5px;font-size:9.4px;line-height:14px;color:#e6e6e6;"><span class="cj">正常</span></div>
<svg class="a" style="left:1029px;top:310px" width="6" height="10" viewBox="0 0 6 10"><path d="M0.5 4 L3 1 L5.5 4Z M0.5 6 L3 9 L5.5 6Z" fill="#d8d8d8"/></svg>
<div class="t" style="left:1044.5px;top:307.5px;font-size:9.4px;line-height:14px;color:#e0e0e0;"><span class="cj">不透明度</span></div>
<div style="left:948px;top:325px;width:132px;height:1px;background:#434343;"></div>
<div class="t" style="left:953px;top:329.5px;font-size:9.4px;line-height:14px;color:#c4c4c4;"><span class="cj">锁定</span>:</div>
<svg class="a" style="left:982px;top:332px" width="9" height="9" viewBox="0 0 9 9"><rect x="0.5" y="0.5" width="8" height="8" fill="#8c8c8c" stroke="#b0b0b0"/><path d="M1 1 H3.5 V3.5 H1Z M6 1 H8 V3.5 H6Z M3.5 3.5 H6 V6 H3.5Z M1 6 H3.5 V8 H1Z M6 6 H8 V8 H6Z" fill="#5a5a5a"/></svg>
<svg class="a" style="left:999px;top:331px" width="12" height="11" viewBox="0 0 12 11"><path d="M11.5 0.5 L5.5 7.5" stroke="#bdbdbd" stroke-width="1.5"/><path d="M5.8 6.2 C4 6 2.5 7.5 0.5 10.5 C3.5 10.8 6.5 9.8 6.8 7.4Z" fill="#bdbdbd"/></svg>
<svg class="a" style="left:1017px;top:332px" width="10" height="10" viewBox="0 0 10 10"><path d="M5 0 L7 2.5 H5.6 V4.4 H7.5 V3 L10 5 L7.5 7 V5.6 H5.6 V7.5 H7 L5 10 L3 7.5 H4.4 V5.6 H2.5 V7 L0 5 L2.5 3 V4.4 H4.4 V2.5 H3Z" fill="#a8a8a8"/></svg>
<svg class="a" style="left:1035px;top:331px" width="9" height="10" viewBox="0 0 9 10"><rect x="0.5" y="4.5" width="8" height="5.5" fill="#bdbdbd"/><path d="M2.2 4.5 V3 A2.3 2.3 0 0 1 6.8 3 V4.5" fill="none" stroke="#bdbdbd" stroke-width="1.3"/><rect x="4" y="6" width="1" height="2.2" fill="#555"/></svg>
<div class="t" style="left:1064px;top:329.5px;font-size:9.4px;line-height:14px;color:#c4c4c4;"><span class="cj">填充</span></div>
<div style="left:948px;top:349px;width:132px;height:1px;background:#3a3a3a;"></div>
<div style="left:948px;top:350px;width:24px;height:31px;background:#4f4f4f;"></div>
<div style="left:972px;top:350px;width:108px;height:31px;background:#566271;"></div>
<div style="left:948px;top:381px;width:132px;height:1px;background:#3d3d3d;"></div>
<div style="left:972px;top:350px;width:1px;height:31px;background:#444;"></div>
<svg class="a" style="left:955px;top:361px" width="10" height="7" viewBox="0 0 10 7"><path d="M0.5 3.5 C2.5 0.2 7.5 0.2 9.5 3.5 C7.5 6.8 2.5 6.8 0.5 3.5Z" fill="#e8e8e8"/><circle cx="5" cy="3.4" r="1.9" fill="#444"/><circle cx="5" cy="3.4" r="0.8" fill="#ddd"/></svg>
<div style="left:974px;top:352px;width:26px;height:26px;background:#fff;border:1px solid #1a2233"></div>
<svg class="a" style="left:975px;top:353px" width="24" height="24" viewBox="0 0 24 24"><defs><radialGradient id="tg" cx="0.45" cy="0.4" r="0.55"><stop offset="0" stop-color="#fffef0"/><stop offset="0.6" stop-color="#fdf9a0"/><stop offset="1" stop-color="#f3ea40"/></radialGradient></defs><circle cx="11.8" cy="11.6" r="9.3" fill="url(#tg)"/><circle cx="14.8" cy="8" r="3" fill="#fffff6"/><circle cx="8.2" cy="10.8" r="2.2" fill="#fffff6"/><circle cx="14.2" cy="7.4" r="1.1" fill="#222"/><circle cx="8" cy="11.2" r="0.9" fill="#333"/><path d="M6.5 15 Q12 15.5 18 11.5 Q17.5 17 8 17.5Z" fill="#fff8d8" stroke="#e8b060" stroke-width="0.6"/><rect x="9.3" y="16" width="4.6" height="5.6" rx="2" fill="#fff0f8" stroke="#f58ad0" stroke-width="1"/></svg>
<div class="t" style="left:1009px;top:359px;font-size:9.4px;line-height:14px;color:#f4f4f4;font-style:italic;transform:skewX(-18deg)"><span class="cj">背景</span></div>
<div style="left:948px;top:382px;width:132px;height:139px;background:#464646;"></div>
<svg class="a" style="left:267px;top:169px" width="396" height="352" viewBox="267 169 396 352">
<defs>
<radialGradient id="fg1" gradientUnits="userSpaceOnUse" cx="0" cy="0" r="1" gradientTransform="translate(468 306) scale(172 118)">
<stop offset="0" stop-color="#ffffff"/><stop offset="0.64" stop-color="#ffffff"/><stop offset="0.82" stop-color="#fffcc4" stop-opacity="0.75"/><stop offset="1" stop-color="#fff66a" stop-opacity="0"/>
</radialGradient>
<radialGradient id="fg2" gradientUnits="userSpaceOnUse" cx="465.5" cy="352" r="153">
<stop offset="0" stop-color="#fdf240" stop-opacity="0"/><stop offset="0.77" stop-color="#fdf240" stop-opacity="0"/><stop offset="0.835" stop-color="#fdf240" stop-opacity="1"/><stop offset="1" stop-color="#fbee3c" stop-opacity="1"/>
</radialGradient>
<linearGradient id="fg0" gradientUnits="userSpaceOnUse" x1="400" y1="230" x2="520" y2="505">
<stop offset="0" stop-color="#fff650"/><stop offset="0.6" stop-color="#fff044"/><stop offset="1" stop-color="#fde83a"/>
</linearGradient>
<linearGradient id="mg" gradientUnits="userSpaceOnUse" x1="400" y1="450" x2="560" y2="400">
<stop offset="0" stop-color="#fcc234"/><stop offset="0.3" stop-color="#ffe038"/><stop offset="1" stop-color="#fff040"/>
</linearGradient>
<filter id="bl3" x="-20%" y="-20%" width="140%" height="140%"><feGaussianBlur stdDeviation="3"/></filter>
<filter id="bl1" x="-20%" y="-20%" width="140%" height="140%"><feGaussianBlur stdDeviation="0.7"/></filter>
<clipPath id="mc"><path d="M378 408.5 C400 408 440 403 475 391.5 C505 381 535 368 558 354.5 C562 352 566 351.5 566.5 356 C570 375 568 395 554 423 C544 441 530 455 510 465 C480 474 445 470 420 458 C400 447 386 428 378 408.5Z"/></clipPath>
<filter id="bl2" x="-20%" y="-20%" width="140%" height="140%"><feGaussianBlur stdDeviation="2.2"/></filter>
<clipPath id="tc"><path d="M421 430 H500 C502 450 502.5 465 502 482 C502 503 486 517 461.5 517 C437 517 421 503 421 482 C420.5 465 420.5 450 421 430Z"/></clipPath>
</defs>
<g filter="url(#bl1)">
<circle cx="465.5" cy="358.5" r="146.5" fill="url(#fg0)"/>
<circle cx="465.5" cy="358.5" r="146.5" fill="url(#fg1)"/>
<circle cx="465.5" cy="358.5" r="146.5" fill="url(#fg2)"/>
<!-- eyes -->
<circle cx="511" cy="302" r="52" fill="#ffffff" filter="url(#bl3)"/><circle cx="511" cy="302" r="47" fill="#ffffff" stroke="#f0eaa6" stroke-width="1.4"/>
<circle cx="405" cy="342.5" r="37" fill="#ffffff" filter="url(#bl3)"/><circle cx="405" cy="342.5" r="32" fill="#ffffff" stroke="#f0eaa6" stroke-width="1.4"/>
<circle cx="499" cy="293" r="14.2" fill="#0a0a0a"/>
<circle cx="404.5" cy="349.3" r="11.7" fill="#0a0a0a"/>
<!-- mouth -->
<path d="M378 408.5 C400 408 440 403 475 391.5 C505 381 535 368 558 354.5 C562 352 566 351.5 566.5 356 C570 375 568 395 554 423 C544 441 530 455 510 465 C480 474 445 470 420 458 C400 447 386 428 378 408.5Z" fill="url(#mg)"/>
<g clip-path="url(#mc)"><path d="M378 408.5 C400 408 440 403 475 391.5 C505 381 535 368 558 354.5 C562 352 566 351.5 566.5 356 C570 375 568 395 554 423 C544 441 530 455 510 465 C480 474 445 470 420 458 C400 447 386 428 378 408.5Z" fill="none" stroke="#f4a020" stroke-width="9" filter="url(#bl2)" opacity="0.75"/></g>
<path d="M378 408.5 C400 408 440 403 475 391.5 C505 381 535 368 558 354.5 C562 352 566 351.5 566.5 356 C570 375 568 395 554 423 C544 441 530 455 510 465 C480 474 445 470 420 458 C400 447 386 428 378 408.5Z" fill="none" stroke="#efa63a" stroke-width="2.2" stroke-linejoin="round"/>
<path d="M420 458 C400 447 386 428 378 408.5 C400 408 440 403 475 391.5 C505 381 535 368 558 354.5 C562 352 566 351.5 566.5 356 C570 375 568 395 554 423" fill="none" stroke="#de7e0c" stroke-width="3.3" stroke-linejoin="round" stroke-linecap="round"/>
<path d="M384 413 C405 411.5 440 407 475 395 C505 385 535 373 560.5 360 C564 366 565 373 564 380 C563 386 561 391 558 396 C548 404 535 410 521 415.5 C510 420 500 424 489 427 C478 430 465 432 452 433 C435 434.5 418 435.5 401.5 435 C396 434.5 394 432.5 392 429 C389 424 386 418.5 384 413Z" fill="#ffffff" stroke="#f9d27c" stroke-width="0.8"/>
</g>
<!-- tongue -->
<g clip-path="url(#tc)">
<rect x="415" y="425" width="95" height="96" fill="#fc54d8"/>
<path d="M427 440 H495 C496 460 496.5 470 496 482 C495.5 500 481 511.5 461.5 511.5 C442 511.5 427.5 500 427 482 C426.5 470 426 460 427 440Z" fill="#ffffff" filter="url(#bl3)"/>
<path d="M429 448 H494 V482 C494 499 481 509.5 461.5 509.5 C442 509.5 429 499 429 482Z" fill="#ffffff" filter="url(#bl2)"/>
<path d="M461 432 C460.5 445 461.5 455 462 467" stroke="#ee6cd2" stroke-width="1.5" fill="none" filter="url(#bl1)"/>
</g>
</svg>
<svg class="a" style="left:20px;top:0px" width="52" height="28" viewBox="20 0 52 28"><rect x="26" y="-0.6" width="38.7" height="22.1" rx="1.2" fill="none" stroke="#e3271b" stroke-width="3.1"/></svg>
<svg class="a" style="left:30px;top:205px" width="92" height="26" viewBox="30 205 92 26"><rect x="35" y="210.6" width="82.8" height="15.1" rx="1.5" fill="none" stroke="#e3271b" stroke-width="2.5"/></svg>
<svg class="a" style="left:130px;top:200px" width="50" height="24" viewBox="130 200 50 24"><path d="M134.6 215.5 L144.2 205.7 L144.6 209.4 C153 208.8 163 207.8 171.9 206.4 C164 210.6 156 213.9 148.9 215.8 L146.9 219.3 Z" fill="#f0220f"/></svg>
</div>
</body></html>
